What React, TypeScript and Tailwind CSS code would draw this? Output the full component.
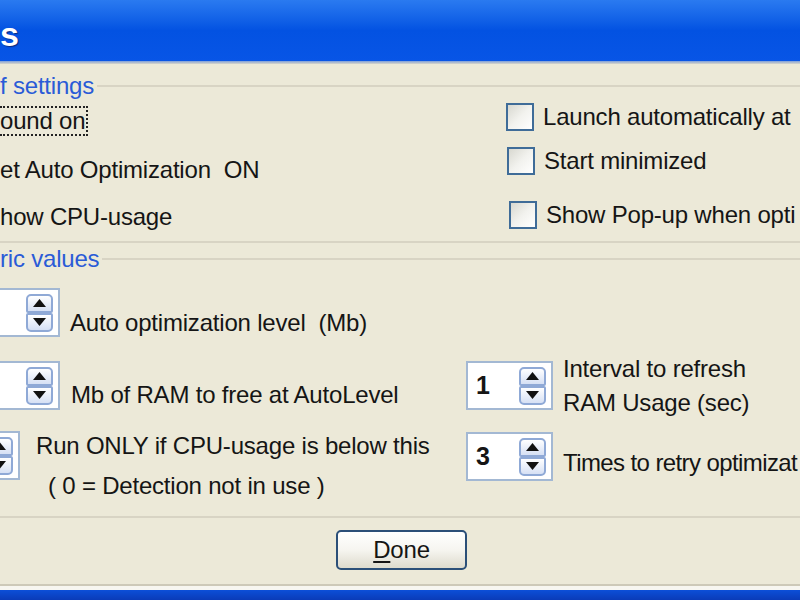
export default function App() {
  const Check = ({ label, className }: { label: string; className: string }) => (
    <div className={`flex h-[28px] items-center ${className}`}>
      <div className="h-[28px] w-[28px] shrink-0 border-2 border-[#3f6c98] bg-gradient-to-br from-[#d8d8d0] via-[#f2f2ee] to-white" />
      <span className="ml-[9px] whitespace-nowrap leading-[28px]">{label}</span>
    </div>
  );

  const SpinButtons = () => (
    <div className="flex w-[27px] flex-col">
      <div className="flex h-[19px] items-center justify-center rounded-t-[5px] rounded-b-[2px] border-2 border-[#8fa9d6] bg-gradient-to-b from-white to-[#d6e0f4]">
        <svg width="13" height="8" viewBox="0 0 13 8">
          <path d="M0 8 L6.5 0 L13 8 Z" fill="#111" />
        </svg>
      </div>
      <div className="flex h-[19px] items-center justify-center rounded-b-[5px] rounded-t-[2px] border-2 border-[#8fa9d6] bg-gradient-to-b from-white to-[#d6e0f4]">
        <svg width="13" height="8" viewBox="0 0 13 8">
          <path d="M0 0 L13 0 L6.5 8 Z" fill="#111" />
        </svg>
      </div>
    </div>
  );

  const Spin = ({ value, className }: { value: string; className: string }) => (
    <div className={`flex h-[49px] w-[87px] shrink-0 items-center justify-between border-2 border-[#a3b8d3] bg-white pl-[8px] pr-[5px] ${className}`}>
      <span className="text-[25px] font-bold leading-none">{value}</span>
      <SpinButtons />
    </div>
  );

  return (
    <div className="flex h-[600px] w-[800px] flex-col overflow-hidden bg-[#ece9d8] font-['Liberation_Sans',Arial,sans-serif] text-[24px] tracking-[-0.2px] text-[#151515]">
      {/* title bar */}
      <div className="flex h-[61px] shrink-0 items-center bg-gradient-to-b from-[#2a7af0] via-[#0352e2] to-[#0855e6] pt-[6px]">
        <span className="text-[34px] font-bold leading-none text-white [text-shadow:1px_1px_1px_#0a2a80]">s</span>
      </div>
      <div className="h-[3px] shrink-0 bg-gradient-to-b from-[#7f9ed8] to-[#d9d6c8]" />

      {/* on / off settings */}
      <div className="mt-[10px] flex h-[24px] shrink-0 items-center">
        <span className="whitespace-nowrap leading-[24px] text-[#2a5bd7]">f settings</span>
        <div className="ml-[3px] h-[2px] flex-1 bg-[#d8d4c4]" />
      </div>
      <div className="grid h-[143px] shrink-0 grid-cols-[506px_1fr]">
        <div className="flex flex-col">
          <div className="mt-[8px] flex">
            <span className="flex h-[30px] items-center border-2 border-l-0 border-dotted border-[#222] pr-[1px] leading-[26px]">ound on</span>
          </div>
          <span className="mt-[19px] h-[30px] whitespace-pre leading-[30px]">et Auto Optimization  ON</span>
          <span className="mt-[17px] h-[30px] leading-[30px]">how CPU-usage</span>
        </div>
        <div className="flex flex-col">
          <Check label="Launch automatically at" className="mt-[5px]" />
          <Check label="Start minimized" className="ml-[1px] mt-[16px]" />
          <Check label="Show Pop-up when opti" className="ml-[3px] mt-[26px]" />
        </div>
      </div>
      <div className="h-[2px] shrink-0 bg-[#d8d4c4]" />

      {/* numeric values */}
      <div className="mt-[4px] flex h-[24px] shrink-0 items-center">
        <span className="whitespace-nowrap leading-[24px] text-[#2a5bd7]">ric values</span>
        <div className="ml-[3px] h-[2px] flex-1 bg-[#d8d4c4]" />
      </div>
      <div className="grid h-[245px] shrink-0 grid-cols-[466px_1fr]">
        <div className="flex flex-col">
          <div className="mt-[17px] flex items-start">
            <Spin value="" className="ml-[-27px]" />
            <span className="ml-[10px] mt-[21px] whitespace-pre leading-[28px]">Auto optimization level  (Mb)</span>
          </div>
          <div className="mt-[24px] flex items-start">
            <Spin value="" className="ml-[-27px]" />
            <span className="ml-[11px] mt-[20px] whitespace-nowrap leading-[28px]">Mb of RAM to free at AutoLevel</span>
          </div>
          <div className="mt-[21px] flex items-start">
            <Spin value="" className="ml-[-67px]" />
            <div className="ml-[16px] mt-[1px] flex flex-col">
              <span className="whitespace-nowrap leading-[28px]">Run ONLY if CPU-usage is below this</span>
              <span className="mt-[12px] whitespace-pre pl-[12px] leading-[28px]">( 0 = Detection not in use )</span>
            </div>
          </div>
        </div>
        <div className="flex flex-col">
          <div className="mt-[90px] flex h-[49px] items-start">
            <Spin value="1" className="" />
            <div className="ml-[10px] mt-[-9px] flex flex-col leading-[34px]">
              <span className="whitespace-nowrap">Interval to refresh</span>
              <span className="whitespace-nowrap">RAM Usage (sec)</span>
            </div>
          </div>
          <div className="mt-[22px] flex items-start">
            <Spin value="3" className="" />
            <span className="ml-[10px] mt-[17px] whitespace-nowrap leading-[28px] tracking-[-0.6px]">Times to retry optimizat</span>
          </div>
        </div>
      </div>
      <div className="h-[2px] shrink-0 bg-[#d8d4c4]" />

      {/* button */}
      <div className="mt-[12px] flex shrink-0 pl-[336px]">
        <button className="flex h-[40px] w-[131px] items-center justify-center rounded-[5px] border-2 border-[#2b4f78] bg-gradient-to-b from-white via-[#f6f5f0] to-[#dedbcd] leading-none">
          <span>
            <span className="underline decoration-[2px] underline-offset-[3px]">D</span>one
          </span>
        </button>
      </div>

      {/* bottom frame */}
      <div className="mt-[14px] h-[2px] shrink-0 bg-[#cdc9b8]" />
      <div className="h-[4px] shrink-0 bg-[#f7f6f0]" />
      <div className="flex-1 bg-gradient-to-b from-[#0c4fd8] to-[#0a3bb8]" />
    </div>
  );
}
